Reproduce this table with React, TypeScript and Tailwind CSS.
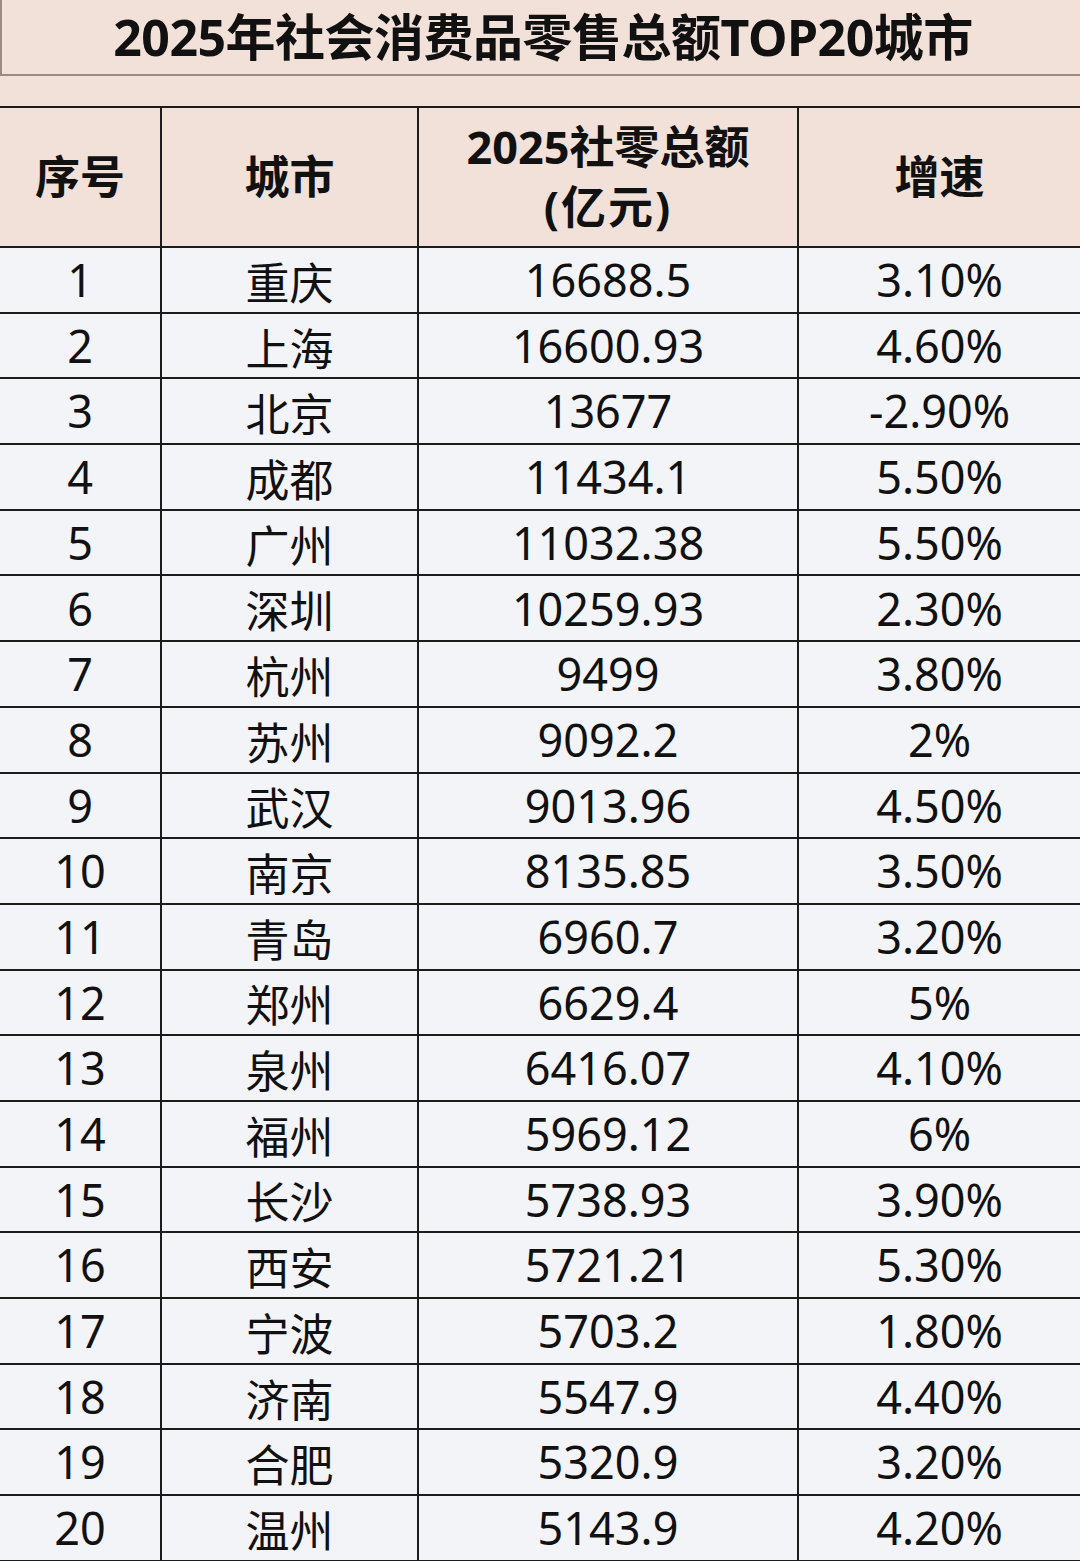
import React from "react";

const rows: [string, string, string][] = [
	["重庆", "16688.5", "3.10%"],
	["上海", "16600.93", "4.60%"],
	["北京", "13677", "-2.90%"],
	["成都", "11434.1", "5.50%"],
	["广州", "11032.38", "5.50%"],
	["深圳", "10259.93", "2.30%"],
	["杭州", "9499", "3.80%"],
	["苏州", "9092.2", "2%"],
	["武汉", "9013.96", "4.50%"],
	["南京", "8135.85", "3.50%"],
	["青岛", "6960.7", "3.20%"],
	["郑州", "6629.4", "5%"],
	["泉州", "6416.07", "4.10%"],
	["福州", "5969.12", "6%"],
	["长沙", "5738.93", "3.90%"],
	["西安", "5721.21", "5.30%"],
	["宁波", "5703.2", "1.80%"],
	["济南", "5547.9", "4.40%"],
	["合肥", "5320.9", "3.20%"],
	["温州", "5143.9", "4.20%"],
];

const font = "font-['Noto_Sans','Noto_Sans_CJK_SC',sans-serif]";
// last column has no right border, so the border-r is added per cell
const cell = "flex items-center justify-center border-b-2 border-[#1c1c1c]";
const mid = `${cell} border-r-2`;

export default function App() {
	return (
		<div className={`w-[1080px] h-[1561px] overflow-hidden bg-[#f2e1d9] text-[#111] ${font}`}>
			<div className="h-[76px] border-b-2 border-l-2 border-[#9a8a84] flex items-center justify-center">
				<h1 className="text-[50px] font-bold leading-none tracking-[-0.5px] pl-[4px]">
					2025年社会消费品零售总额TOP20城市
				</h1>
			</div>
			<div className="h-[30px]" />

			<div className="grid grid-cols-[162px_257px_380px_281px] border-t-2 border-[#1c1c1c]">
				<div className={`${mid} h-[140px] text-[45px] font-bold`}>序号</div>
				<div className={`${mid} h-[140px] text-[45px] font-bold`}>城市</div>
				<div className={`${mid} h-[140px] flex-col text-[45px] font-bold leading-[60px]`}>
					<span>2025社零总额</span>
					<span className="tracking-[2px]">(亿元)</span>
				</div>
				<div className={`${cell} h-[140px] text-[45px] font-bold`}>增速</div>

				{rows.map(([city, total, growth], i) => (
					<React.Fragment key={city}>
						<div className={`${mid} h-[65.7px] bg-[#f3f4f7] text-[45px]`}>{i + 1}</div>
						<div className={`${mid} h-[65.7px] bg-[#f3f4f7] text-[44px] pt-[6px]`}>{city}</div>
						<div className={`${mid} h-[65.7px] bg-[#f3f4f7] text-[45px]`}>{total}</div>
						<div className={`${cell} h-[65.7px] bg-[#f3f4f7] text-[45px]`}>{growth}</div>
					</React.Fragment>
				))}
			</div>
		</div>
	);
}
